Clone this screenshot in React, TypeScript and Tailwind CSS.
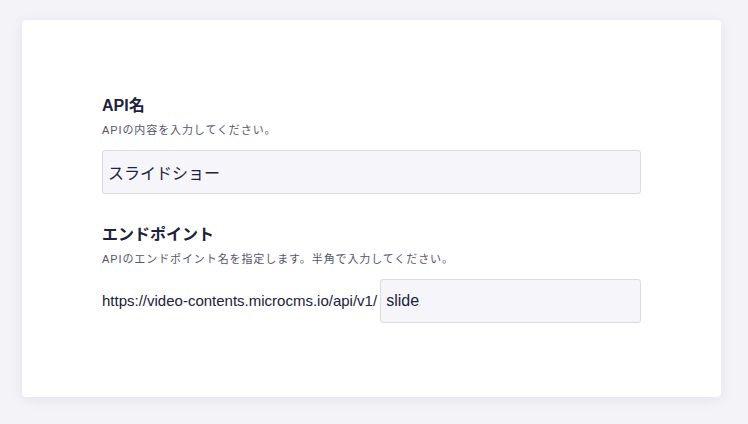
import React from 'react';

// API settings form card
const font = { fontFamily: '"Liberation Sans", "Noto Sans CJK JP", sans-serif' };

const Field: React.FC<{ title: string; desc: string; children: React.ReactNode; className?: string }> = ({
  title,
  desc,
  children,
  className = '',
}) => (
  <div className={className}>
    <h2 className="text-[16px] leading-[20px] font-bold text-[#21213b]">{title}</h2>
    <p className="mt-[6px] text-[11px] leading-[16px] tracking-[0.9px] text-[#55556a]">{desc}</p>
    {children}
  </div>
);

export default function App() {
  return (
    <div className="min-h-[424px] w-full bg-[#f3f3f8] pt-[20px] pl-[22px]" style={font}>
      <div className="w-[699px] h-[377px] bg-white rounded-[4px] shadow-[0_2px_14px_rgba(40,40,90,0.08)] px-[80px] pt-[76px]">
        <Field title="API名" desc="APIの内容を入力してください。">
          <input
            readOnly
            value="スライドショー"
            className="mt-[12px] block w-full h-[44px] px-[5px] bg-[#f6f6fa] border border-[#dadae2] rounded-[3px] text-[16px] text-[#21213b] outline-none"
            style={font}
          />
        </Field>
        <Field
          className="mt-[31px]"
          title="エンドポイント"
          desc="APIのエンドポイント名を指定します。半角で入力してください。"
        >
          <div className="mt-[12px] flex items-center">
            <span className="text-[15px] text-[#21213b] mr-[3px]">https://video-contents.microcms.io/api/v1/</span>
            <input
              readOnly
              value="slide"
              className="flex-1 h-[44px] px-[5px] bg-[#f6f6fa] border border-[#dadae2] rounded-[3px] text-[16px] text-[#21213b] outline-none"
              style={font}
            />
          </div>
        </Field>
      </div>
    </div>
  );
}
